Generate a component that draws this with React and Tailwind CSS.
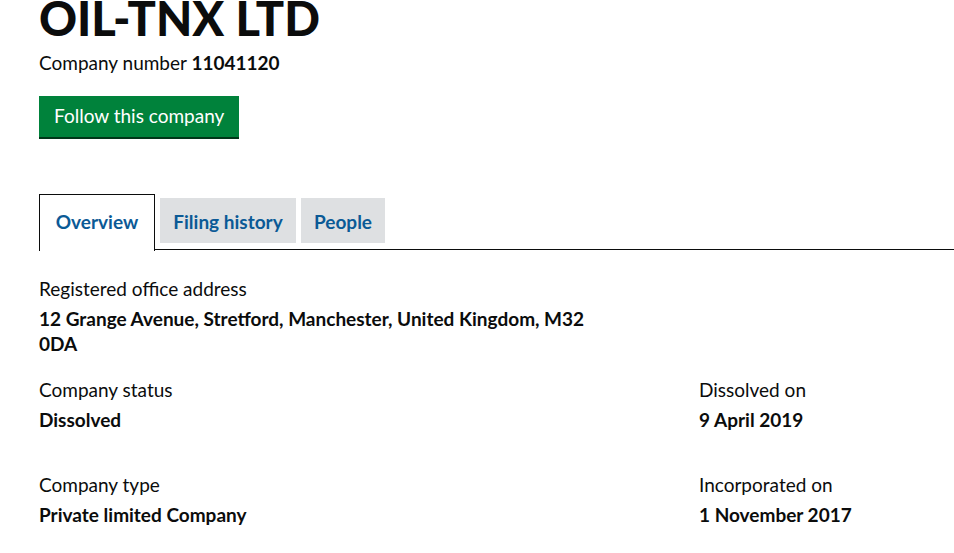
export default function App() {
  const font = { fontFamily: 'Lato, "Open Sans", Arial, sans-serif' };
  return (
    <div className="w-[954px] h-[553px] overflow-hidden bg-white text-[#0b0c0c]" style={font}>
      <div className="pl-[39px]">
        <h1 className="text-[47px] font-black leading-none -mt-[5px]">OIL-TNX LTD</h1>
        <p className="mt-[8px] text-[19px] leading-[25px]">
          Company number <strong className="font-bold">11041120</strong>
        </p>
        <div className="mt-[21px]">
          <button className="h-[41px] px-[15px] bg-[#00823b] text-white text-[19px] leading-[39px] shadow-[0_2px_0_#003618] pb-[2px]">
            Follow this company
          </button>
        </div>
      </div>
      <div className="mt-[57px] flex items-end pl-[39px]">
        <div className="h-[57px] w-[116px] border border-b-0 border-[#0b0c0c] flex items-center justify-center pb-[2px] text-[19px] font-bold text-[#0b5a96] relative -mb-px bg-white z-10">
          Overview
        </div>
        <div className="flex-1 border-b border-[#0b0c0c] flex items-end pb-[6px] gap-[5px] pl-[5px]">
          <div className="h-[45px] w-[136px] pt-[3px] bg-[#dee0e2] flex items-center justify-center text-[19px] font-bold text-[#0b5a96]">Filing history</div>
          <div className="h-[45px] w-[84px] pt-[3px] bg-[#dee0e2] flex items-center justify-center text-[19px] font-bold text-[#0b5a96]">People</div>
        </div>
      </div>
      <div className="pl-[39px] pt-[26px] text-[19px] leading-[25px]">
        <div>
          <div>Registered office address</div>
          <div className="mt-[5px] font-bold w-[575px]">12 Grange Avenue, Stretford, Manchester, United Kingdom, M32 0DA</div>
        </div>
        <div className="mt-[21px] grid grid-cols-[660px_1fr]">
          <div>
            <div>Company status</div>
            <div className="mt-[5px] font-bold">Dissolved</div>
          </div>
          <div>
            <div>Dissolved on</div>
            <div className="mt-[5px] font-bold">9 April 2019</div>
          </div>
        </div>
        <div className="mt-[40px] grid grid-cols-[660px_1fr]">
          <div>
            <div>Company type</div>
            <div className="mt-[5px] font-bold">Private limited Company</div>
          </div>
          <div>
            <div>Incorporated on</div>
            <div className="mt-[5px] font-bold">1 November 2017</div>
          </div>
        </div>
      </div>
    </div>
  );
}
